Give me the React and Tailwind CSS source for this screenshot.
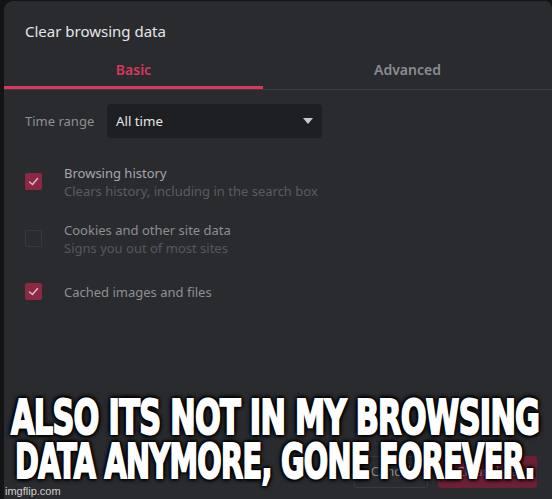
import React, { useLayoutEffect, useRef, useState } from "react";

function FitLine({ text, left, top, width }) {
  const ref = useRef(null);
  const [scale, setScale] = useState(1);
  useLayoutEffect(() => {
    if (ref.current) {
      const w = ref.current.offsetWidth;
      if (w > 0) setScale(width / w);
    }
  }, [width, text]);
  return (
    <div
      className="absolute whitespace-nowrap origin-left"
      style={{ left, top, transform: `scaleX(${scale})` }}
    >
      <span
        ref={ref}
        className="inline-block text-[48px] leading-[40px] font-bold text-white tracking-[-1px] [-webkit-text-stroke:2px_#fff] [font-family:'DejaVu_Sans_Condensed','Liberation_Sans_Narrow','Liberation_Sans',sans-serif] [text-shadow:2px_2px_4px_#000,-2px_-2px_4px_#000,2px_-2px_4px_#000,-2px_2px_4px_#000,0_0_7px_#000]"
      >
        {text}
      </span>
    </div>
  );
}

function Check({ checked }) {
  if (checked) {
    return (
      <div className="w-[17px] h-[17px] rounded-[2px] bg-[#8d2844] flex items-center justify-center shrink-0">
        <svg width="17" height="17" viewBox="0 0 17 17">
          <polyline points="4.5,9 7.5,11.5 12.5,5.5" fill="none" stroke="#dcbcc6" strokeWidth="1.4" strokeLinecap="round" strokeLinejoin="round" />
        </svg>
      </div>
    );
  }
  return <div className="w-[17px] h-[17px] rounded-[2px] border-[1.5px] border-[#38393e] shrink-0" />;
}

export default function App() {
  return (
    <div className="relative w-[552px] h-[499px] overflow-hidden bg-[#141417] flex pt-[1px] pl-[4px] [font-family:'Noto_Sans',sans-serif]">
      <div className="flex-1 h-full bg-[#2a2b2f] rounded-tl-[9px] rounded-tr-[7px] flex flex-col">
        <div className="pl-[21px] pt-[20px] text-[15px] leading-[20px] text-[#e6e6e8]">Clear browsing data</div>

        <div className="mt-[11px] flex border-b border-[#3a3b40]">
          <div className="w-[259px] h-[37px] flex items-center justify-center border-b-[3px] border-[#dc3560] -mb-[1px] text-[14px] font-semibold text-[#d8375e]">
            Basic
          </div>
          <div className="flex-1 h-[37px] flex items-center justify-center pb-[3px] text-[14px] font-semibold text-[#8b8c91]">
            Advanced
          </div>
        </div>

        <div className="mt-[14px] flex items-center pl-[21px]">
          <div className="w-[82px] text-[13px] text-[#8e8f94] pt-[2px]">Time range</div>
          <div className="w-[215px] h-[34px] rounded-[4px] bg-[#1e1f22] flex items-center justify-between pl-[9px] pr-[9px]">
            <span className="text-[13.3px] text-[#e6e6e6] pt-[2px]">All time</span>
            <svg width="10" height="6" viewBox="0 0 10 6">
              <polygon points="0,0 10,0 5,6" fill="#c9c9cc" />
            </svg>
          </div>
        </div>

        <div className="mt-[26px] flex items-center pl-[21px]">
          <div className="-mt-[2px]"><Check checked /></div>
          <div className="ml-[22px] text-[13px] leading-[18px]">
            <div className="text-[#a6a7ab]">Browsing history</div>
            <div className="text-[#5b5c61]">Clears history, including in the search box</div>
          </div>
        </div>

        <div className="mt-[21px] flex items-center pl-[21px]">
          <div className="-mt-[2px]"><Check /></div>
          <div className="ml-[22px] text-[13px] leading-[18px]">
            <div className="text-[#8d8e92]">Cookies and other site data</div>
            <div className="text-[#56575c]">Signs you out of most sites</div>
          </div>
        </div>

        <div className="mt-[26px] flex items-center pl-[21px]">
          <div className="-mt-[1px]"><Check checked /></div>
          <div className="ml-[22px] text-[13px] leading-[18px] text-[#8e8f93]">Cached images and files</div>
        </div>

        <div className="mt-auto mb-[11px] mr-[15px] flex justify-end gap-[10px]">
          <div className="w-[74px] h-[32px] rounded-[3px] border border-[#3a3b40] flex items-center justify-center text-[13px] text-[#8a8b90]">
            Cancel
          </div>
          <div className="w-[99px] h-[32px] rounded-[3px] bg-[#6d1f36] flex items-center justify-center text-[13px] text-[#b88a97]">
            Clear data
          </div>
        </div>
      </div>

      <FitLine text="ALSO ITS NOT IN MY BROWSING" left={11} top={397} width={528} />
      <FitLine text="DATA ANYMORE, GONE FOREVER." left={15} top={441} width={520} />

      <div className="absolute left-[5px] top-[485px] text-[11px] leading-[13px] text-[#cfcfcf] [font-family:'Liberation_Sans',sans-serif]">
        imgflip.com
      </div>
    </div>
  );
}
